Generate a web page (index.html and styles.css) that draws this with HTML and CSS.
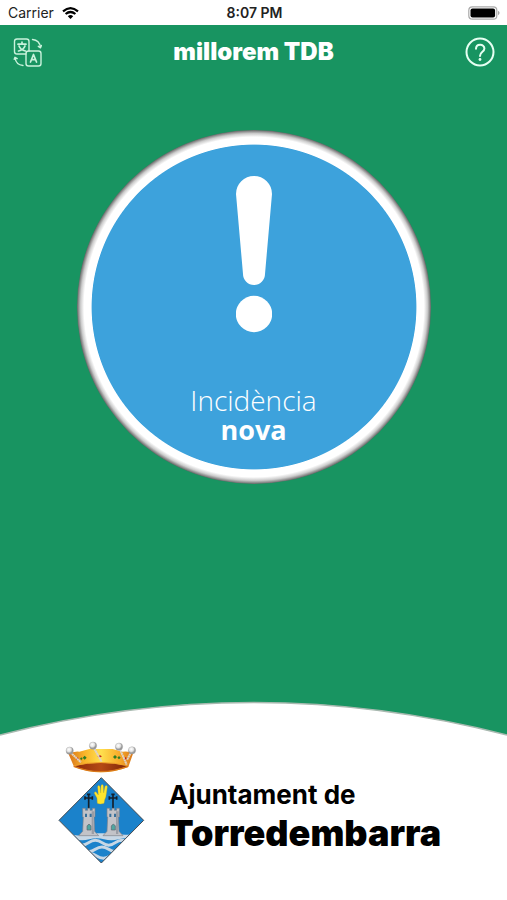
FILE: index.html
```html
<!DOCTYPE html>
<html lang="ca">

<head>
    <meta charset="UTF-8">
    <meta name="viewport" content="width=device-width, initial-scale=1.0">
    <title>millorem TDB</title>
    <link rel="stylesheet" href="styles.css">
</head>

<body>
    <div class="status">
        <div class="carrier">
            <span>Carrier</span>
            <svg class="wifi" viewBox="0 0 17 12" aria-hidden="true">
                <path d="M1 4.400Q8.500-2 16 4.400" fill="none" stroke="#000" stroke-width="2.200" />
                <path d="M3.600 7Q8.500 3 13.400 7" fill="none" stroke="#000" stroke-width="2.200" />
                <path d="M5.800 9.200Q8.500 6.800 11.200 9.200L8.500 12z" />
            </svg>
        </div>
        <span class="time">8:07 PM</span>
        <svg class="battery" viewBox="0 0 33 14" aria-hidden="true">
            <rect x=".8" y=".8" width="28" height="12.400" rx="3.500" fill="#fff" stroke="#aaa" stroke-width="1.200" />
            <rect x="2.500" y="2.500" width="24.600" height="9" rx="2" />
            <path d="M30.400 4.800q2 2.200 0 4.400z" fill="#777" />
        </svg>
    </div>

    <header class="bar">
        <button class="icon-btn" type="button" aria-label="Idioma">
            <svg viewBox="0 0 30 30" fill="none" stroke="#c9f2dc" stroke-width="1.400" stroke-linecap="round" stroke-linejoin="round">
                <path d="M14 17H5a2.500 2.500 0 0 1-2.500-2.500V4.500A2.500 2.500 0 0 1 5 2H14.500a2.500 2.500 0 0 1 2.500 2.500V14" />
                <rect x="14" y="14" width="15" height="15" rx="2.500" />
                <path d="M6 7.200h8M10 5.200v2M7 9q1.500 4 6.500 5M13 9q-1.500 4-6.500 5" stroke-width="1.700" />
                <path d="M18.500 25L21.500 17.500l3 7.500M19.500 22.700h4" stroke-width="1.700" />
                <path d="M20.500 2.500q7 .5 8 8M26.300 9.300l2.200 1.500 1-2.300" />
                <path d="M11 28.500Q4 28 3 20.500M2.200 22.300l.8-2 2.200 1.300" />
            </svg>
        </button>
        <h1 class="title">millorem TDB</h1>
        <button class="icon-btn" type="button" aria-label="Ajuda">
            <svg viewBox="0 0 30 30" fill="none" stroke="#e6fff2" stroke-width="2">
                <circle cx="15" cy="15" r="13.500" />
                <path d="M11 11.800c0-5.400 8.400-5.400 8.400-.2 0 3.400-4.400 3-4.400 7.400" stroke-linecap="round" />
                <circle cx="15" cy="22.500" r="1.400" fill="#e6fff2" stroke="none" />
            </svg>
        </button>
    </header>

    <main class="main">
        <button class="report" type="button">
            <svg class="mark" viewBox="0 0 36 157" fill="#fff" aria-hidden="true">
                <path d="M0 18a18 18 0 0 1 36 0L29 98a11 11 0 0 1-22 0z" />
                <circle cx="18" cy="138" r="18.200" />
            </svg>
            <span class="label">Incidència</span>
            <strong class="label">nova</strong>
        </button>
    </main>

    <footer class="footer">
        <svg class="arc" viewBox="0 0 507 36" preserveAspectRatio="none" aria-hidden="true">
            <path d="M0 36V34Q253.500-31 507 34V36z" fill="#fff" />
            <path d="M0 34Q253.500-31 507 34" fill="none" stroke="#a9b9b0" stroke-width="1.500" />
        </svg>
        <div class="brand">
            <svg class="shield" viewBox="24 20 261 369" aria-hidden="true">
                <defs>
                    <linearGradient id="gold">
                        <stop offset="0" stop-color="#d9731a" />
                        <stop offset=".25" stop-color="#f9b52a" />
                        <stop offset=".5" stop-color="#ffe04f" />
                        <stop offset=".8" stop-color="#f7a928" />
                        <stop offset="1" stop-color="#d9781c" />
                    </linearGradient>
                    <linearGradient id="inside">
                        <stop offset="0" stop-color="#8e2a0a" />
                        <stop offset=".5" stop-color="#b54a14" />
                        <stop offset="1" stop-color="#7c2408" />
                    </linearGradient>
                    <radialGradient id="pearl" cx=".4" cy=".35">
                        <stop offset="0" stop-color="#fff" />
                        <stop offset=".6" stop-color="#e4e4e4" />
                        <stop offset="1" stop-color="#999" />
                    </radialGradient>
                    <clipPath id="diamond">
                        <path d="M154 130L281 258 154 386 27 258z" />
                    </clipPath>
                    <g id="tower">
                        <path d="M116 178v50M104 191h24M111 180h10M105 186v10M127 186v10" fill="none" stroke="#15202b" stroke-width="5" />
                        <path d="M98 222h8v6h7v-6h7v6h7v-6h8v26h-3l2 43 12 13H86l12-13 2-43h-2z" fill="#c2c3c8" stroke="#7d828b" stroke-width="2" />
                        <path d="M125 231v68h7l-2-51h3v-17z" fill="#9a9da5" />
                        <path d="M105 238h6v10h-6zM119 238h6v10h-6z" fill="#38709b" />
                        <path d="M111 287v-12q6-10 12 0v12z" fill="#4fa6a0" stroke="#5d6370" stroke-width="2" />
                    </g>
                </defs>
                <!-- crown -->
                <path d="M56 60Q70 50 88 52L118 44H188L218 52Q240 50 249 58L235 98Q152 130 72 97z" fill="url(#gold)" />
                <path d="M72 95Q152 76 234 95 152 128 72 95z" fill="url(#inside)" />
                <path d="M72 94Q152 75 233 94" fill="none" stroke="#f0a02a" stroke-width="3" />
                <path d="M71 96Q152 128 234 96" fill="none" stroke="#d9781c" stroke-width="4" />
                <path d="M98 70l6-6 6 6-6 6zM189 68l6-6 6 6-6 6zM202 70l5-5 5 5-5 5zM90 73l4-4 4 4-4 4z" fill="#2e7d24" />
                <path d="M77 73l6-5 4 6-6 4zM142 66l7-4 7 4-7 4zM220 73l6-5 5 4-6 6z" fill="#c32a18" />
                <path d="M61 54L93 84M130 38L155 82M209 43L230 91M244 52L231 77" stroke="#ddd3c8" stroke-width="6" stroke-dasharray="6 1" />
                <g fill="url(#pearl)" stroke="#999" stroke-width="1">
                    <circle cx="59" cy="49" r="11" />
                    <circle cx="129" cy="34" r="11" />
                    <circle cx="207" cy="37" r="11" />
                    <circle cx="246" cy="48" r="11" />
                </g>
                <!-- shield -->
                <path d="M154 130L281 258 154 386 27 258z" fill="#1b82cb" />
                <g clip-path="url(#diamond)">
                    <path d="M20 306q22-14 44-6t44-3h92q22 8 44 2t50 10v6q-22 6-44 0t-44 0-44 0-44 0-44 0-54-2z" fill="#c7d7e5" />
                    <g fill="none" stroke="#c7d7e5" stroke-width="9">
                        <path d="M36 325q20-15 40 0t40 0 40 0 40 0 40 0 40 0" />
                        <path d="M56 345q20-14 40 0t40 0 40 0 40 0 40 0" />
                        <path d="M100 365q20-13 40 0t40 0 40 0" />
                    </g>
                    <use href="#tower" />
                    <use href="#tower" x="73" />
                </g>
                <path d="M142 207l-1-16-8-14q0-6 5-4l7 9-2-25q3-7 7 0l2 19 1-22q4-7 7 0l1 22 4-20q5-5 7 1l-3 21q-1 12-5 18l-2 11q-12 4-20 0z" fill="#ffe52d" stroke="#c9ac1c" stroke-width="1" />
                <path d="M154 130L281 258 154 386 27 258z" fill="none" stroke="#454b52" stroke-width="3" />
            </svg>
            <p class="council">
                <span class="council-of">Ajuntament de</span>
                <span class="council-name">Torredembarra</span>
            </p>
        </div>
    </footer>
</body>

</html>
```

FILE: styles.css
```css
* {
    box-sizing: border-box;
}

body,
h1,
p {
    margin: 0;
    padding: 0;
}

body {
    min-height: 100vh;
    display: flex;
    flex-direction: column;
    background: #189461;
    font-family: "Open Sans", "Noto Sans", sans-serif;
}

button {
    padding: 0;
    border: 0;
    background: none;
    font: inherit;
    cursor: pointer;
}

svg {
    display: block;
}

/* status bar */
.status {
    height: 25px;
    padding: 0 6px 0 8px;
    display: grid;
    grid-template-columns: 1fr auto 1fr;
    align-items: center;
    background: #fff;
    color: #222;
    font-family: Inter, sans-serif;
    font-size: 14px;
    line-height: 24px;
}

.carrier {
    display: flex;
    align-items: center;
    gap: 8px;
}

.wifi {
    width: 17px;
    height: 12px;
}

.time {
    font-weight: 600;
}

.battery {
    width: 33px;
    height: 14px;
    justify-self: end;
}

/* title bar */
.bar {
    padding: 12px 12px;
    display: flex;
    justify-content: space-between;
    align-items: center;
}

.icon-btn,
.icon-btn svg {
    width: 30px;
    height: 30px;
}

.title {
    color: #fff;
    font-family: Inter, sans-serif;
    font-size: 24px;
    font-weight: 900;
    line-height: 30px;
}

/* main button */
.main {
    flex: 1;
    padding: 51px 16px;
    display: flex;
    justify-content: center;
    align-items: flex-start;
}

.report {
    width: 354px;
    max-width: 100%;
    aspect-ratio: 1;
    padding-bottom: 39px;
    display: flex;
    flex-direction: column;
    align-items: center;
    justify-content: flex-end;
    border-radius: 50%;
    /* blue disc, white ring, grey edge */
    background: radial-gradient(closest-side, #3da2dc 91.5%, #fff 92%, #fff 96%, #ccc 98%, #666 100%);
    color: #fff;
    font-size: 27px;
    line-height: 30px;
}

.mark {
    width: 36px;
    height: 157px;
    margin-bottom: 52px;
}

span.label {
    font-size: 28px;
    font-weight: 300;
}

strong.label {
    font-weight: 700;
}

/* footer */
.arc {
    width: 100%;
    height: 36px;
}

.brand {
    padding: 4px 58px 36px;
    display: flex;
    gap: 24px;
    background: #fff;
}

.shield {
    width: 87px;
    height: 123px;
    flex-shrink: 0;
}

.council {
    padding-top: 36px;
    display: flex;
    flex-direction: column;
    color: #000;
    font-family: Inter, sans-serif;
}

.council-of {
    font-size: 26px;
    font-weight: 700;
    line-height: 36px;
}

.council-name {
    font-size: 36px;
    font-weight: 900;
    line-height: 40px;
}
```
